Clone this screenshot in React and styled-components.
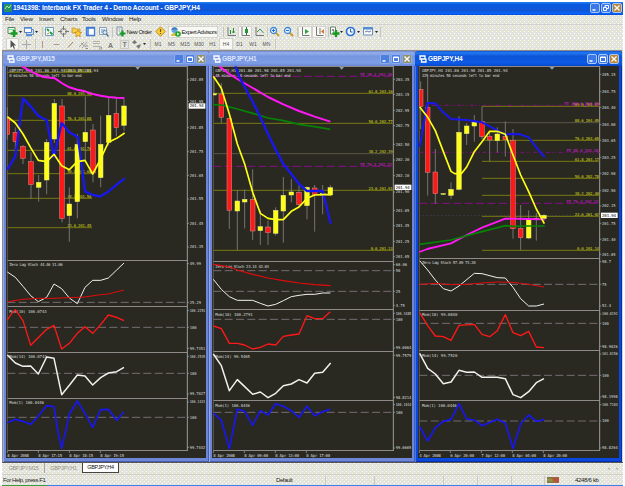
import React from 'react'
import styled, { createGlobalStyle } from 'styled-components'

const YELLOW = '#ffff14'
const RED = '#ff1818'
const BLUE = '#1717ee'
const MAGENTA = '#ff18f4'
const GREEN = '#068306'
const WHITE = '#f0f0ee'
const GRID = '#85807f'

// chart drawings use 3 units per pixel
const UNIT = 3

const IconText = styled.text`
    font-family: 'Liberation Sans', Arial, sans-serif;
    font-size: 7px;
    font-weight: 700;
    fill: #777;
`

const windows = [
    {
        title: 'GBPJPY,M15', width: 206, x0: 18, left: 22, right: 562, axis: 569,
        panes: [
            {
                top: 51, height: 194, marker: 413,
                heads: [
                    { t: 'GBPJPY,M15  201.86 201.98 201.85 201.94', y: 70, x: 28, w: 267 },
                    { t: '0 minutes 58 seconds left to bar end', y: 84, x: 28, w: 217 },
                ],
                fibs: [
                    { y: 70, t: '100.0_202.08' }, { y: 140, t: '88.6_201.98' }, { y: 214, t: '76.4_201.88' },
                    { y: 304, t: '61.8_201.76' }, { y: 374, t: '50.0_201.66' }, { y: 448, t: '38.2_201.56' }, { y: 536, t: '23.6_201.45' },
                ].map(f => ({ ...f, from: 22, to: 276 })),
                candles: [
                    [22, 208, 257, 175, 272, 0], [46, 250, 278, 235, 305, 0], [69, 292, 328, 288, 345, 0], [93, 338, 407, 310, 450, 0],
                    [116, 400, 415, 378, 458, 1], [140, 280, 393, 270, 436, 1], [163, 163, 270, 150, 282, 1], [186, 171, 508, 150, 520, 0],
                    [208, 465, 500, 415, 578, 1], [232, 286, 458, 255, 508, 1], [256, 250, 278, 143, 340, 1], [279, 243, 372, 225, 400, 0],
                    [302, 286, 386, 200, 415, 1], [326, 199, 280, 145, 290, 1], [349, 193, 236, 148, 262, 0], [372, 171, 229, 150, 245, 1],
                ],
                lines: [
                    { c: BLUE, w: 7, p: '22,362 46,322 69,148 92,172 115,200 140,214 162,325 185,222 208,250 234,265 255,427 278,438 302,442 325,428 350,407 374,388' },
                    { c: MAGENTA, w: 6, p: '66,52 98,70 130,84 165,88 185,102 208,115 232,122 255,127 278,135 302,140 325,144 350,146 373,147' },
                    { c: YELLOW, w: 5, p: '22,203 46,222 69,255 92,296 115,334 140,338 162,316 185,350 208,362 232,338 255,334 278,375 302,330 325,280 350,268 374,252' },
                ],
                ticks: [['202.05', 92], ['201.95', 157], ['201.85', 236], ['201.75', 308], ['201.65', 379], ['201.55', 450], ['201.45', 523], ['201.35', 594]],
                price: 171,
            },
            {
                top: 18, height: 46, heads: [{ t: 'Zero Lag Stoch 44.46 31.06', y: 37, x: 28, w: 160 }], levels: [145],
                lines: [
                    { c: WHITE, w: 3, p: '22,54 46,70 69,97 92,125 115,143 140,130 162,90 185,104 208,132 232,149 255,100 278,79 302,79 325,72 350,48 372,27' },
                    { c: '#e00b0b', w: 3, p: '22,143 69,136 115,133 162,133 208,131 255,129 302,122 325,120 372,108' },
                ],
                ticks: [['49.99', 29], ['25.29', 145]],
            },
            {
                top: 156, height: 46, heads: [{ t: 'Mom(10) 100.0743', y: 176, x: 28, w: 112 }], levels: [220],
                lines: [{ c: RED, w: 4, p: '22,198 34,180 46,167 69,200 92,274 140,226 162,214 185,285 208,268 232,238 255,218 278,238 302,212 325,183 350,190 372,200' }],
                ticks: [['100.2251', 170], ['100', 220], ['99.7351', 283]],
            },
            {
                top: 294, height: 46, heads: [{ t: 'Mom(14) 100.0743', y: 313, x: 28, w: 112 }], levels: [358],
                lines: [{ c: WHITE, w: 4.5, p: '22,303 46,327 69,337 92,336 115,360 140,309 162,313 185,422 208,394 232,363 255,366 278,393 302,371 325,357 350,353 372,340' }],
                ticks: [['100.2535', 307], ['100', 358], ['99.7027', 420]],
            },
            {
                top: 432, height: 53, heads: [{ t: 'Mom(1) 100.0446', y: 450, x: 28, w: 104 }], levels: [490], last: true,
                lines: [{ c: BLUE, w: 5, p: '22,506 46,496 69,502 92,511 115,486 140,455 162,458 175,540 185,583 196,535 208,480 232,441 255,478 278,520 302,467 325,466 350,499 372,473' }],
                ticks: [['100.1421', 444], ['100', 490], ['99.7442', 580]],
            },
        ],
        dates: [['8 Apr 2008', 22], ['8 Apr 17:15', 115], ['8 Apr 18:15', 208], ['8 Apr 19:15', 301]],
    },
    {
        title: 'GBPJPY,H1', width: 206, x0: 12, left: 16, right: 556, axis: 563,
        panes: [
            {
                top: 51, height: 195, marker: 401,
                heads: [
                    { t: 'GBPJPY,H1  201.86 201.98 201.85 201.94', y: 70, x: 22, w: 257 },
                    { t: '45 minutes 58 seconds left to bar end', y: 84, x: 22, w: 226 },
                ],
                fibs: [
                    { y: 133, t: '61.8_203.16' }, { y: 223, t: '50.0_202.77' }, { y: 314, t: '38.2_202.39', dim: true },
                    { y: 424, t: '23.6_201.91' }, { y: 604, t: '0.0_201.13' },
                ].map(f => ({ ...f, from: 16, to: 556 })),
                pivots: [{ y: 82, t: 'FE 38.4_203.38', from: 16 }, { y: 352, t: 'FE 76.4_202.22', from: 16 }],
                candles: [
                    [18, 134, 138, 85, 136, 1], [40, 135, 205, 102, 223, 0], [64, 208, 484, 208, 540, 0], [88, 456, 486, 424, 604, 1],
                    [110, 451, 459, 422, 538, 1], [134, 451, 546, 361, 573, 0], [157, 533, 545, 485, 588, 1], [180, 534, 551, 515, 588, 0],
                    [203, 484, 553, 475, 560, 1], [226, 439, 486, 384, 581, 1], [250, 429, 438, 390, 460, 1], [273, 430, 467, 408, 475, 0],
                    [297, 415, 470, 412, 511, 1], [320, 417, 437, 408, 548, 0], [344, 434, 438, 408, 496, 1], [367, 416, 438, 408, 440, 1],
                ],
                lines: [
                    { c: MAGENTA, w: 6, p: '34,52 64,75 88,90 134,117 180,144 226,166 273,186 320,203 367,218' },
                    { c: GREEN, w: 5, p: '16,167 40,168 88,180 134,193 180,207 226,215 273,226 320,233 367,241' },
                    { c: BLUE, w: 7, p: '82,52 97,90 134,158 155,200 180,255 203,302 226,345 250,375 273,405 297,426 344,426 368,524' },
                    { c: YELLOW, w: 5, p: '16,82 40,118 64,195 88,285 110,345 134,430 157,493 180,508 203,512 226,512 250,487 273,474 297,448 320,438 344,437 370,437' },
                ],
                ticks: [['203.35', 91], ['203.15', 136], ['202.95', 184], ['202.75', 230], ['202.50', 286], ['202.30', 333], ['202.10', 380], ['201.90', 429], ['201.65', 484], ['201.45', 530], ['201.25', 577], ['201.05', 623]],
                price: 415,
            },
            {
                top: 21, height: 48, heads: [{ t: 'Zero Lag Stoch 23.14 42.03', y: 41, x: 22, w: 161 }], levels: [50, 112],
                lines: [
                    { c: '#e00b0b', w: 3.5, p: '16,31 40,35 64,39 88,48 134,61 180,72 226,80 273,87 320,92 367,95' },
                    { c: WHITE, w: 3, p: '16,76 40,106 64,128 88,139 134,139 157,148 180,156 203,151 226,140 250,128 273,124 297,121 320,121 344,117 367,117' },
                ],
                ticks: [['60.06', 32], ['50', 50], ['25', 112], ['4.75', 154]],
            },
            {
                top: 165, height: 42, heads: [{ t: 'Mom(10) 100.2791', y: 185, x: 22, w: 112 }], levels: [196],
                lines: [{ c: RED, w: 4, p: '16,216 40,224 64,268 88,268 110,273 134,285 157,280 180,270 203,273 226,247 250,243 273,240 297,185 320,194 344,194 367,173' }],
                ticks: [['100.3485', 178], ['100', 196], ['99.0064', 282]],
            },
            {
                top: 291, height: 49, heads: [{ t: 'Mom(14) 99.5465', y: 312, x: 22, w: 104 }], levels: [],
                lines: [{ c: WHITE, w: 4.5, p: '16,300 40,335 64,410 88,377 110,398 134,421 157,414 180,431 203,418 226,395 250,390 273,377 297,387 320,358 344,355 368,327' }],
                ticks: [['99.7579', 304], ['98.8214', 430]],
            },
            {
                top: 438, height: 51, heads: [{ t: 'Mom(1) 100.0446', y: 458, x: 22, w: 104 }], levels: [475], last: true,
                lines: [{ c: BLUE, w: 5, p: '16,477 40,499 64,584 88,465 110,472 134,514 157,470 180,483 203,449 226,457 250,470 273,490 297,457 320,485 344,473 367,466' }],
                ticks: [['100.1814', 452], ['100', 475], ['99.0665', 582]],
            },
        ],
        dates: [['8 Apr 2008', 16], ['8 Apr 09:00', 109], ['8 Apr 13:00', 202], ['8 Apr 17:00', 295]],
    },
    {
        title: 'GBPJPY,H4', width: 207, active: true, x0: 12, left: 16, right: 557, axis: 564,
        panes: [
            {
                top: 51, height: 192, marker: 414,
                heads: [
                    { t: 'GBPJPY,H4  201.86 201.98 201.85 201.94', y: 70, x: 24, w: 257 },
                    { t: '225 minutes 58 seconds left to bar end', y: 84, x: 24, w: 232 },
                ],
                fibs: [
                    { y: 172, t: '100.0_204.43' }, { y: 221, t: '88.6_204.05', dim: true }, { y: 274, t: '76.4_203.65' }, { y: 337, t: '61.8_203.17' },
                    { y: 388, t: '50.0_202.78' }, { y: 439, t: '38.2_202.40' }, { y: 502, t: '23.6_201.92' }, { y: 604, t: '0.0_201.14' },
                ].map(f => ({ ...f, from: 204, to: 557 })),
                pivots: [
                    { y: 169, t: 'FE 100.0_204.45', from: 16, dots: true }, { y: 310, t: 'FE 88.6_203.38', from: 16, dots: true },
                    { y: 463, t: 'FE 76.4_202.22', from: 16 },
                ],
                bid: 500,
                candles: [
                    [20, 121, 173, 97, 240, 0], [41, 175, 370, 82, 440, 0], [64, 369, 434, 300, 464, 0], [88, 434, 436, 432, 438, 1],
                    [111, 421, 439, 400, 450, 1], [135, 250, 421, 202, 424, 1], [158, 231, 254, 222, 288, 1], [181, 220, 231, 198, 278, 1],
                    [204, 217, 263, 172, 270, 0], [227, 262, 273, 250, 337, 0], [250, 255, 275, 235, 310, 1], [274, 262, 272, 217, 323, 0],
                    [297, 274, 539, 240, 569, 0], [320, 538, 566, 468, 604, 0], [344, 510, 567, 484, 570, 1], [367, 508, 511, 492, 575, 1], [390, 499, 509, 495, 515, 1],
                ],
                lines: [
                    { c: BLUE, w: 6, p: '17,294 40,162 64,163 88,190 111,210 158,213 204,220 227,232 250,244 274,258 285,255 320,256 344,265 367,295 392,325' },
                    { c: MAGENTA, w: 5.5, p: '16,609 40,600 111,583 158,558 204,536 274,509 344,510 392,511' },
                    { c: GREEN, w: 5, p: '16,586 111,573 158,560 204,548 274,530 297,532 344,531 392,531' },
                    { c: YELLOW, w: 5, p: '17,174 40,203 64,245 88,308 111,367 122,374 142,374 158,354 181,308 204,278 227,247 250,247 274,256 297,318 320,378 344,428 367,480 391,524' },
                ],
                ticks: [['205.15', 76], ['204.75', 128], ['204.40', 175], ['204.00', 227], ['203.65', 274], ['203.25', 325], ['202.90', 373], ['202.50', 425], ['202.15', 471], ['201.75', 523], ['201.40', 571], ['201.05', 616]],
                price: 499,
            },
            {
                top: 12, height: 52, heads: [{ t: 'Zero Lag Stoch 57.09 73.20', y: 30, x: 24, w: 161 }], levels: [91],
                lines: [
                    { c: WHITE, w: 3, p: '17,20 41,48 64,78 88,104 111,111 135,96 181,58 204,59 250,71 274,72 297,100 320,134 344,156 367,156 390,150' },
                    { c: '#e00b0b', w: 3, p: '17,91 64,88 111,92 158,91 204,87 250,84 297,85 344,91 390,99' },
                ],
                ticks: [['98.7', 23], ['75', 91], ['52.4', 156]],
            },
            {
                top: 168, height: 40, heads: [{ t: 'Mom(10) 99.0840', y: 187, x: 24, w: 106 }], levels: [208],
                lines: [{ c: RED, w: 4, p: '17,176 41,215 64,246 88,248 111,259 135,214 181,211 204,241 227,248 250,230 274,182 297,236 320,245 344,232 367,279 390,281' }],
                ticks: [['100.8191', 180], ['100', 208], ['98.9026', 277]],
            },
            {
                top: 288, height: 50, heads: [{ t: 'Mom(14) 99.7520', y: 308, x: 24, w: 106 }], levels: [364],
                lines: [{ c: WHITE, w: 4.5, p: '17,298 41,343 64,360 88,389 111,384 135,349 158,355 181,354 204,370 250,370 274,374 297,422 320,431 344,413 367,386 390,374' }],
                ticks: [['101.8156', 300], ['100', 364], ['98.1998', 429]],
            },
            {
                top: 438, height: 51, heads: [{ t: 'Mom(1) 100.0446', y: 459, x: 24, w: 104 }], levels: [501], last: true,
                lines: [{ c: BLUE, w: 5, p: '17,518 41,561 64,521 88,502 111,496 135,449 158,495 181,498 204,515 250,496 274,507 297,583 320,510 344,483 367,502 390,497' }],
                ticks: [['100.7184', 452], ['100', 501], ['98.8264', 582]],
            },
        ],
        dates: [['4 Apr 2008', 16], ['6 Apr 20:00', 109], ['7 Apr 12:00', 202], ['8 Apr 04:00', 295], ['8 Apr 20:00', 388]],
    },
]

function Pane({ pane, win }) {
    const bottom = pane.top + pane.height * UNIT
    const boxWidth = (win.width - 6) * UNIT
    return (
        <PaneSvg $h={pane.height} viewBox={`${win.x0} ${pane.top} ${boxWidth} ${pane.height * UNIT}`} preserveAspectRatio='none'>
            <line x1={win.left} x2={win.right} y1={pane.top + 1.5} y2={pane.top + 1.5} stroke='#8f8a89' strokeWidth='3' />
            {pane.last && <line x1={win.left} x2={win.right} y1={bottom - 1.5} y2={bottom - 1.5} stroke='#8f8a89' strokeWidth='3' />}
            <line x1={win.left} x2={win.left} y1={pane.top} y2={bottom} stroke='#77706f' strokeWidth='2' />
            <line x1={win.right} x2={win.right} y1={pane.top} y2={bottom} stroke='#9d9998' strokeWidth='3' />
            {(pane.levels || []).map(y => (
                <line key={y} x1={win.left} x2={win.right} y1={y} y2={y} stroke='#756b70' strokeWidth='3' strokeDasharray='24 10' />
            ))}
            {pane.bid && <line x1={win.left} x2={win.right} y1={pane.bid} y2={pane.bid} stroke='#434362' strokeWidth='2.5' strokeDasharray='4 7' />}
            {(pane.fibs || []).map(f => (
                <g key={f.y}>
                    <line x1={f.from} x2={f.to} y1={f.y} y2={f.y} stroke={f.dim ? '#595645' : '#777711'} strokeWidth='3' />
                    <Label x={f.to - 2} y={f.y - 2} textAnchor='end' textLength={f.t.length * 6.6} fill='#d2d218'>{f.t}</Label>
                </g>
            ))}
            {(pane.pivots || []).map(f => (
                <g key={f.y}>
                    <line x1={f.from} x2={win.right} y1={f.y} y2={f.y} stroke='#860d86' strokeWidth='3' strokeDasharray={f.dots ? '11 6 3 6 3 9' : '24 10'} />
                    <Label x={win.right - 4} y={f.y - 2} textAnchor='end' textLength={f.t.length * 6.8} fill='#d01ad0'>{f.t}</Label>
                </g>
            ))}
            {pane.heads.map(h => (
                <Label key={h.t} x={h.x} y={h.y} textLength={h.w} fill='#d8d8d6'>{h.t}</Label>
            ))}
            {(pane.candles || []).map(([x, top, end, hi, lo, up]) => {
                const from = Math.max(x - 7, win.left)
                return (
                    <g key={x}>
                        <line x1={x} x2={x} y1={hi} y2={lo} stroke={GRID} strokeWidth='2.5' />
                        <rect x={from} y={top} width={x + 7 - from} height={end - top} fill={up ? YELLOW : RED} stroke={up ? '#e5e58c' : '#d89090'} strokeWidth='1.5' />
                    </g>
                )
            })}
            {pane.lines.map(l => (
                <polyline key={l.p} points={l.p} fill='none' stroke={l.c} strokeWidth={l.w} strokeLinejoin='round' />
            ))}
            {pane.marker && <path d={`M${pane.marker - 7} 54h14l-7 8z`} fill='#8aa5b8' />}
            {pane.ticks.map(([t, y]) => (
                <g key={t}>
                    <line x1={win.right} x2={win.right + 5} y1={y} y2={y} stroke='#aaa' strokeWidth='2' />
                    <Label x={win.axis} y={y + 4} textLength={Math.min(t.length * 6.8, 47)} lengthAdjust='spacingAndGlyphs' fill='#dededc'>{t}</Label>
                </g>
            ))}
            {pane.price && (
                <g>
                    <rect x={win.right + 4} y={pane.price - 8} width='50' height='16' fill='#fff' />
                    <Label x={win.axis} y={pane.price + 4} textLength='42' fill='#000'>201.94</Label>
                </g>
            )}
        </PaneSvg>
    )
}

function ChartWindow({ win }) {
    return (
        <Frame $w={win.width} $active={win.active}>
            <WindowTitle $active={win.active}>
                <svg width='8' height='8' viewBox='0 0 8 8'>
                    <path d='M1 1h5v3H1zM2.5 4v3h4.5V3.5' fill='none' stroke='#fff' strokeWidth='1.3' />
                </svg>
                <WindowName>{win.title}</WindowName>
                <WindowButtons active={win.active} />
            </WindowTitle>
            <ChartBody>
                {win.panes.map(p => <Pane key={p.top} pane={p} win={win} />)}
                <TimeAxis viewBox={`${win.x0} 591 ${(win.width - 6) * UNIT} 21`}>
                    {win.dates.map(([t, x]) => (
                        <g key={t}>
                            <line x1={x} x2={x} y1='591' y2='597' stroke='#aaa' strokeWidth='2' />
                            <Label x={x} y='608' textLength={t.length * 6.5} fill='#dededc'>{t}</Label>
                        </g>
                    ))}
                </TimeAxis>
            </ChartBody>
        </Frame>
    )
}

function WindowButtons({ active, main }) {
    return (
        <ButtonGroup>
            <CaptionButton $active={active}>
                <svg width='8' height='8'><path d='M1.5 6h3' stroke='#fff' strokeWidth='1.5' /></svg>
            </CaptionButton>
            <CaptionButton $active={active}>
                <svg width='8' height='8'>
                    {main
                        ? <path d='M3 3V1.5h3.5v3H5M1.5 3.5h3v3h-3z' fill='none' stroke='#fff' />
                        : <path d='M1.5 2h5v4.5h-5zM1.5 2.5h5' fill='none' stroke='#fff' />}
                </svg>
            </CaptionButton>
            <CaptionButton $active={active} $close>
                <svg width='8' height='8'><path d='M1.5 1.5l5 5M6.5 1.5l-5 5' stroke='#fff' strokeWidth='1.3' /></svg>
            </CaptionButton>
        </ButtonGroup>
    )
}

const icons = {
    newChart: <><path d='M1 1.5h7v6H1z' fill='#eef3ee' stroke='#5d8064' /><path d='M2 3.5h5' stroke='#6e9' /><path d='M7 4v7M3.5 7.5h7' stroke='#179b25' strokeWidth='2.6' /></>,
    profiles: <><path d='M3.5 3.5h7v5h-7z' fill='#cfe0f6' stroke='#668cc0' /><path d='M1.5 1.5h7v5h-7z' fill='#fff' stroke='#4f83cc' /><path d='M1 2h8M3 9.5h6' stroke='#5b8fd8' strokeWidth='1.5' /></>,
    market: <><path d='M1.5 1.5h8v8h-8z' fill='#f4fbff' stroke='#6ea0c0' /><path d='M3 3l2 2M6 6l2.5 2.5' stroke='#259b39' strokeWidth='1.8' /><path d='M3 8l2-1' stroke='#d47a3d' /></>,
    target: <><circle cx='5.5' cy='5.5' r='3' fill='none' stroke='#777' /><path d='M5.5 0v4M5.5 7v4M0 5.5h4M7 5.5h4' stroke='#777' /></>,
    navigator: <><path d='M1 2h3l1 1h4v4H1z' fill='#f6cf4d' stroke='#bd8b27' strokeWidth='.7' /><path d='M7 4l1.2 2.2 2.5.3-1.8 1.8.4 2.4L7 9.5l-2.2 1.2.4-2.4-1.7-1.8 2.4-.3z' fill='#ffd33a' stroke='#bf7e1c' strokeWidth='.7' /></>,
    terminal: <><path d='M1.5 1.5h8v8h-8z' fill='#fff' stroke='#3e7ed5' strokeWidth='1.3' /><path d='M1 2h9M3 2v7' stroke='#3e7ed5' strokeWidth='1.5' /></>,
    tester: <><path d='M1.5 1.5h7v7h-7z' fill='#edf3fa' stroke='#8ba0b9' /><path d='M3 4h4M3 6h2' stroke='#6a8cb8' /><circle cx='7' cy='6.5' r='2' fill='#d7ecfa' stroke='#6786a9' /><path d='M8.5 8l2 2.5' stroke='#55749a' strokeWidth='1.3' /></>,
    order: <><path d='M2 1h5v8H2z' fill='#fff' stroke='#789' /><path d='M3.5 3h2M3.5 5h2' stroke='#888' /><path d='M7.5 4.5v6M4.5 7.5h6' stroke='#179b25' strokeWidth='2.2' /></>,
    meta: <><path d='M5.5.8l4.7 4.7-4.7 4.7L.8 5.5z' fill='#fbd13c' stroke='#c28a1e' /><path d='M5.5 3v3M5.5 7v1' stroke='#765010' strokeWidth='1.2' /></>,
    expert: <><circle cx='4.5' cy='4' r='3' fill='#65a5df' /><path d='M1 3.5c2-2.5 5-2.5 7 0z' fill='#3c79b8' /><path d='M1 10c0-4 7-4 7 0z' fill='#e0b845' /><circle cx='8' cy='8' r='2.8' fill='#17a62b' /><path d='M7.2 6.5l2.2 1.5-2.2 1.5z' fill='#fff' /></>,
    bars: <><path d='M2 1v8.5h8' fill='none' stroke='#777' /><path d='M4.5 4v4M7.5 2v5M6 6h3' stroke='#289135' strokeWidth='1' /></>,
    candles: <><path d='M2 1v8.5h8' fill='none' stroke='#777' /><path d='M6.5 1v8' stroke='#33703d' /><path d='M5 3h3v4H5z' fill='#25943a' /></>,
    line: <><path d='M2 1v8.5h8' fill='none' stroke='#777' /><path d='M3 6l3-3 3.5 4' fill='none' stroke='#40954a' /></>,
    zoomIn: <><circle cx='4.5' cy='4.5' r='3' fill='#e3f3ff' stroke='#4489d6' strokeWidth='1.3' /><path d='M3 4.5h3M4.5 3v3' stroke='#276dc3' /><path d='M7 7l3 3' stroke='#c49929' strokeWidth='1.8' /></>,
    zoomOut: <><circle cx='4.5' cy='4.5' r='3' fill='#e3f3ff' stroke='#4489d6' strokeWidth='1.3' /><path d='M3 4.5h3' stroke='#276dc3' /><path d='M7 7l3 3' stroke='#c49929' strokeWidth='1.8' /></>,
    scroll: <><path d='M2.5 1v8.5h7' fill='none' stroke='#777' /><path d='M5 3l4 2.5L5 8z' fill='#2da444' /></>,
    shift: <><path d='M2.5 1v8.5h7M6 2v6' fill='none' stroke='#777' /><path d='M10 3L7 5.5 10 8z' fill='#d37730' /></>,
    indicators: <><path d='M1.5 1h5v7h-5z' fill='#fff' stroke='#69816d' /><path d='M3 5l1-2 1 3' fill='none' stroke='#69816d' /><path d='M7 4v7M3.5 7.5h7' stroke='#179b25' strokeWidth='2.3' /></>,
    clock: <><circle cx='5.5' cy='5.5' r='4' fill='#eef7ff' stroke='#2c71d4' strokeWidth='1.7' /><path d='M5.5 3v3h2' fill='none' stroke='#375c91' /></>,
    template: <><path d='M1.5 1.5h9v7.5h-9z' fill='#f6fafc' stroke='#6b8fc0' /><path d='M1 2.5h10' stroke='#4e8bd8' strokeWidth='2' /><path d='M3 6l2-1 2 1 2-1' fill='none' stroke='#779' /></>,
    cursor: <path d='M3.5 1v8l2-2 1.5 3 1-.6-1.3-2.8h2.5z' fill='#555' />,
    cross: <path d='M5.5 1v9M1 5.5h9' stroke='#aaa' />,
    vline: <path d='M5.5 2v7' stroke='#b99a8a' />,
    hline: <path d='M2.5 5.5h6' stroke='#b99a8a' />,
    trend: <path d='M3 8.5l5-5.5' stroke='#a5785e' />,
    channel: <><path d='M1 8l5-5M4 9l5-6M3 4l5 4' stroke='#929292' strokeWidth='.8' /><path d='M7.5 7h2.5M7.5 9.5h2.5' stroke='#777' strokeWidth='.8' /></>,
    fibo: <><path d='M1 2.5h7M1 4.5h7M1 7.5h7' stroke='#aaa396' strokeWidth='.8' /><path d='M7 8h2.5v2H7' fill='none' stroke='#888' strokeWidth='.8' /></>,
    letterA: <IconText x='3' y='8.5'>A</IconText>,
    label: <><path d='M1.5 1.5h8v8h-8z' fill='none' stroke='#aaa' strokeDasharray='1 1' /><IconText x='3.5' y='8'>T</IconText></>,
    arrows: <><path d='M1 3.5L3.5 1 6 3.5 3.5 5z' fill='#777' /><path d='M5 7l5-2-2 5z' fill='#777' /></>,
}

const mainTools = [
    { icon: 'newChart', w: 12 }, { arrow: true, w: 4 }, { icon: 'profiles', w: 12 }, { arrow: true, w: 5 }, { sep: true, w: 4 },
    { icon: 'market', w: 13 }, { icon: 'target', w: 14 }, { icon: 'navigator', w: 13 }, { icon: 'terminal', w: 14 }, { icon: 'tester', w: 13 }, { sep: true, w: 3 },
    { icon: 'order', w: 40, text: 'New Order' }, { icon: 'meta', w: 15 }, { icon: 'expert', w: 50, text: 'Expert Advisors', on: true }, { sep: true, w: 6 },
    { icon: 'bars', w: 14 }, { icon: 'candles', w: 14, on: true }, { icon: 'line', w: 14 }, { sep: true, w: 2 },
    { icon: 'zoomIn', w: 13 }, { icon: 'zoomOut', w: 14 }, { sep: true, w: 3 },
    { icon: 'scroll', w: 14, on: true }, { icon: 'shift', w: 14, on: true }, { sep: true, w: 3 },
    { icon: 'indicators', w: 10 }, { arrow: true, w: 5 }, { icon: 'clock', w: 12 }, { arrow: true, w: 5 }, { icon: 'template', w: 13 }, { arrow: true, w: 5 }, { sep: true, w: 2 },
]

const drawTools = [
    { icon: 'cursor', w: 13, on: true }, { icon: 'cross', w: 14 }, { sep: true, w: 3 },
    { icon: 'vline', w: 13 }, { icon: 'hline', w: 14 }, { icon: 'trend', w: 14 }, { icon: 'channel', w: 13 }, { icon: 'fibo', w: 14 },
    { icon: 'letterA', w: 13 }, { icon: 'label', w: 14 }, { icon: 'arrows', w: 11 }, { arrow: true, w: 5 }, { sep: true, w: 4 },
    { period: 'M1', w: 14 }, { period: 'M5', w: 13 }, { period: 'M15', w: 14 }, { period: 'M30', w: 14 }, { period: 'H1', w: 13 },
    { period: 'H4', w: 14, on: true }, { period: 'D1', w: 13 }, { period: 'W1', w: 14 }, { period: 'MN', w: 13 }, { sep: true, w: 3 },
]

function Tools({ items }) {
    return items.map((item, i) => {
        if (item.sep) return <Separator key={i} $w={item.w} />
        if (item.arrow) return <DropArrow key={i} $w={item.w}><svg width='3' height='2'><path d='M0 0h3L1.5 2z' fill='#222' /></svg></DropArrow>
        if (item.period) return <Period key={i} $w={item.w} $on={item.on}>{item.period}</Period>
        return (
            <ToolButton key={i} $w={item.w} $on={item.on}>
                <svg width='11' height='11' viewBox='0 0 11 11'>{icons[item.icon]}</svg>
                {item.text && <span>{item.text}</span>}
            </ToolButton>
        )
    })
}

function App() {
    return (
        <Desktop>
            <GlobalStyle />
            <TitleBar>
                <svg width='8' height='8' viewBox='0 0 8 8'><path d='M0 0h8v8H0z' fill='#2b8f63' /><path d='M1 5l2-3 2 2 2-3' fill='none' stroke='#a5f0a0' /></svg>
                <AppName>1941398: Interbank FX Trader 4 - Demo Account - GBPJPY,H4</AppName>
                <WindowButtons active main />
            </TitleBar>
            <MenuBar>
                {[['File', 15], ['View', 19], ['Insert', 21], ['Charts', 22], ['Tools', 20], ['Window', 27], ['Help', 16]].map(([name, w]) => (
                    <MenuItem key={name} $w={w}>{name}</MenuItem>
                ))}
            </MenuBar>
            <Toolbar $h={14}><Tools items={mainTools} /></Toolbar>
            <Toolbar $h={12}><Tools items={drawTools} /></Toolbar>
            <Workspace>
                {windows.map(win => <ChartWindow key={win.title} win={win} />)}
            </Workspace>
            <TabBar>
                <Tab $w={42} $line>GBPJPY,M15</Tab>
                <Tab $w={37}>GBPJPY,H1</Tab>
                <Tab $w={37} $active>GBPJPY,H4</Tab>
                <TabArrows><span>‹</span><span>›</span></TabArrows>
            </TabBar>
            <StatusBar>
                <StatusCell $w={273}>For Help, press F1</StatusCell>
                <StatusCell $w={51} $line>Default</StatusCell>
                <StatusCell $w={49} $line />
                <StatusCell $w={69} $line />
                <StatusCell $w={34} $line />
                <StatusCell $w={34} $line />
                <StatusCell $w={33} $line />
                <Connection>
                    <svg width='12' height='6'><path d='M0 0h12v6H0z' fill='#9a6c45' /><path d='M1 1v4M3 1v4M5 2v3' stroke='#4db546' /><path d='M7 1v3M9 1v4M11 1v4' stroke='#db3535' /><path d='M0 3h5' stroke='#c84' /></svg>
                    <span>4248/6 kb</span>
                </Connection>
            </StatusBar>
            <Taskbar />
        </Desktop>
    )
}

export default App

const GlobalStyle = createGlobalStyle`
    body{
        margin: 0;
        background: #fff;
        overflow: hidden;
    }
    *{
        box-sizing: border-box;
    }
    svg{
        display: block;
        flex: none;
    }
`

const Desktop = styled.div`
    width: 625px;
    height: 486px;
    padding: 2px 2px 0 2px;
    display: flex;
    flex-direction: column;
    background: #fff;
    color: #222;
    font-family: 'Liberation Sans', Arial, sans-serif;
    font-size: 6px;
    line-height: 1;
    white-space: nowrap;
`

const TitleBar = styled.div`
    width: 621px;
    height: 13px;
    display: flex;
    align-items: center;
    padding: 0 1px 0 2px;
    background: linear-gradient(#2384f5, #0a5ae0 18%, #1056d5 65%, #0764fa 90%, #0648c8);
`

const AppName = styled.div`
    flex: 1;
    margin-left: 1px;
    color: #fff;
    font-weight: 700;
    font-size: 6.6px;
    letter-spacing: -0.08px;
`

const ButtonGroup = styled.div`
    display: flex;
    gap: 1px;
`

const CaptionButton = styled.div`
    width: 10px;
    height: 10px;
    display: flex;
    align-items: center;
    justify-content: center;
    border: 1px solid ${p => (p.$active ? '#a9c6f7' : '#8eabea')};
    border-radius: 2px;
    background: ${p => (p.$close ? (p.$active ? '#b78537' : '#92916e') : (p.$active ? '#3c79e8' : '#4b7ede')) };
`

// light speckle over the classic control colour
const Face = styled.div`
    width: 621px;
    background-color: #e3e3dd;
    background-image:
        conic-gradient(at 1px 1px, transparent 75%, #fff 0),
        conic-gradient(at 1px 1px, transparent 75%, #fff 0),
        conic-gradient(at 1px 1px, transparent 75%, #ffffa0 0);
    background-size: 4px 4px, 8px 4px, 8px 4px;
    background-position: 0 0, 2px 2px, 6px 2px;
`

const MenuBar = styled(Face)`
    height: 10px;
    display: flex;
    align-items: center;
    padding-left: 3px;
    border-bottom: 1px solid #d3d2ca;
`

const MenuItem = styled.div`
    width: ${p => p.$w}px;
    font-size: 6.2px;
    letter-spacing: -0.15px;
`

const Toolbar = styled(Face)`
    height: ${p => p.$h}px;
    display: flex;
    align-items: center;
    padding-left: 4px;
`

const ToolButton = styled.div`
    width: ${p => p.$w}px;
    height: 12px;
    display: flex;
    align-items: center;
    justify-content: center;
    gap: 1px;
    background: ${p => (p.$on ? '#f8f8f5' : 'transparent')};
    box-shadow: ${p => (p.$on ? 'inset 0 0 0 1px #d4d3cb' : 'none')};
    font-size: 6px;
    letter-spacing: -0.45px;
`

const DropArrow = styled.div`
    width: ${p => p.$w}px;
    display: flex;
    justify-content: center;
`

const Separator = styled.div`
    width: ${p => p.$w}px;
    height: 10px;
    border-right: 1px solid #c8c7be;
`

const Period = styled.div`
    width: ${p => p.$w}px;
    height: 12px;
    display: flex;
    align-items: center;
    justify-content: center;
    background: ${p => (p.$on ? '#f8f8f5' : 'transparent')};
    box-shadow: ${p => (p.$on ? 'inset 0 0 0 1px #d4d3cb' : 'none')};
    color: #555;
    font-size: 5px;
`

const Workspace = styled.div`
    width: 621px;
    height: 412px;
    display: flex;
    padding: 1px 0 0 1px;
    border-right: 1px solid #d5d5d5;
    background: #8d8d8d;
`

const Frame = styled.div`
    width: ${p => p.$w}px;
    height: 411px;
    padding: 0 3px 3px;
    border-radius: 3px 3px 0 0;
    background: ${p => (p.$active ? '#0a48dd' : '#6d87d8')};
    box-shadow: inset 1px 0 0 ${p => (p.$active ? '#3b7bf2' : '#91a9ea')}, inset -1px -1px 0 ${p => (p.$active ? '#0430a8' : '#4b5cac')};
    overflow: hidden;
`

const WindowTitle = styled.div`
    height: 15px;
    margin: 0 -3px;
    padding: 1px 3px 0 4px;
    display: flex;
    align-items: center;
    border-radius: 3px 3px 0 0;
    background: ${p => (p.$active
        ? 'linear-gradient(#0d52cf, #2479f3 12%, #0d54d6 35%, #0c5ae6 80%, #0648c8)'
        : 'linear-gradient(#7088cd, #93afee 12%, #7795df 35%, #7d9de7 80%, #6b85d2)')};
    color: ${p => (p.$active ? '#fff' : '#dde5fb')};
`

const WindowName = styled.div`
    flex: 1;
    margin-left: 1px;
    font-size: 6.5px;
    font-weight: 700;
    letter-spacing: -0.15px;
`

const ChartBody = styled.div`
    display: flex;
    flex-direction: column;
    background: #292922;
`

const PaneSvg = styled.svg`
    width: 100%;
    height: ${p => p.$h}px;
    flex: none;
`

const TimeAxis = styled.svg`
    width: 100%;
    height: 7px;
`

const Label = styled.text`
    font-family: 'DejaVu Sans Mono', monospace;
    font-size: 12px;
`

const TabBar = styled(Face)`
    height: 12px;
    display: flex;
    align-items: flex-start;
    padding-left: 1px;
    border-top: 1px solid #555;
`

const Tab = styled.div`
    width: ${p => p.$w}px;
    height: 10px;
    display: flex;
    align-items: center;
    justify-content: center;
    background: ${p => (p.$active ? '#fff' : 'transparent')};
    border: ${p => (p.$active ? '1px solid #444' : '0')};
    border-right: ${p => (p.$line ? '1px solid #aaa89d' : p.$active ? '1px solid #444' : '0')};
    border-top: 0;
    color: ${p => (p.$active ? '#111' : '#969287')};
    font-size: 5.5px;
    letter-spacing: -0.35px;
`

const TabArrows = styled.div`
    margin: 2px 5px 0 auto;
    display: flex;
    gap: 6px;
    color: #777;
`

const StatusBar = styled(Face)`
    height: 11px;
    display: flex;
    align-items: center;
    border-top: 1px solid #cfcec6;
`

const StatusCell = styled.div`
    width: ${p => p.$w}px;
    height: 9px;
    padding-left: 1px;
    display: flex;
    align-items: center;
    border-right: ${p => (p.$line ? '1px solid #cac9c1' : '0')};
    font-size: 6px;
    letter-spacing: -0.4px;
`

const Connection = styled.div`
    display: flex;
    align-items: center;
    gap: 16px;
    margin-left: 2px;
    letter-spacing: -0.3px;
`

const Taskbar = styled.div`
    height: 1px;
    background: linear-gradient(90deg, #3b9d3b 45px, #3b82e8 45px);
`
